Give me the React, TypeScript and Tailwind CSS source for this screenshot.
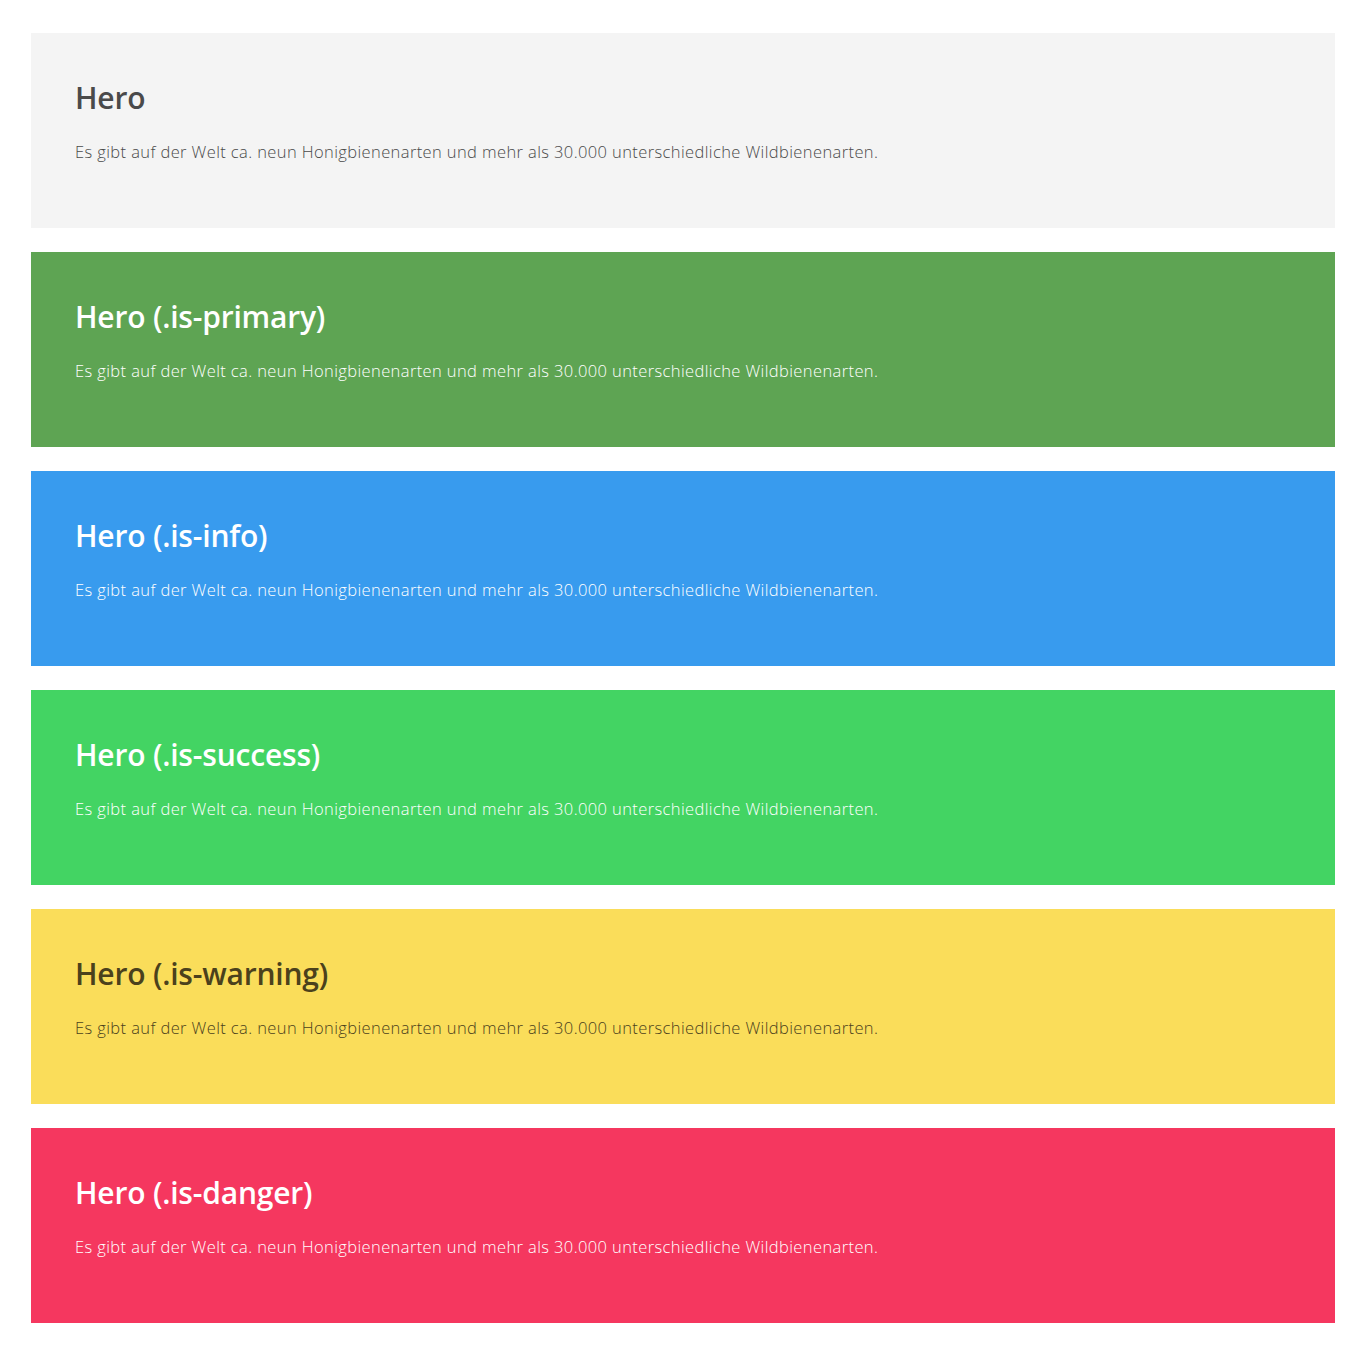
import React from 'react';

type HeroProps = {
  title: string;
  className: string;
};

const text = 'Es gibt auf der Welt ca. neun Honigbienenarten und mehr als 30.000 unterschiedliche Wildbienenarten.';

const Hero: React.FC<HeroProps> = ({ title, className }) => (
  <section className={`h-[195px] w-[1304px] px-[44px] pt-[43px] ${className}`}>
    <h1 className="text-[30px] leading-[44px] font-semibold tracking-[-0.2px]">{title}</h1>
    <p className="mt-[20px] text-[16.5px] leading-[24px] font-light tracking-[0.39px]">{text}</p>
  </section>
);

const App: React.FC = () => {
  return (
    <div className="min-h-[1352px] bg-white pl-[31px] pt-[33px] font-['Open_Sans',sans-serif]">
      <div className="flex flex-col gap-6">
        {/* 기본 */}
        <Hero title="Hero" className="bg-[#f4f4f4] text-[#4a4a4a]" />
        <Hero title="Hero (.is-primary)" className="bg-[#5ea453] text-white" />
        <Hero title="Hero (.is-info)" className="bg-[#389bee] text-white" />
        <Hero title="Hero (.is-success)" className="bg-[#43d463] text-white" />
        <Hero title="Hero (.is-warning)" className="bg-[#fadd5a] text-[#4b411c]" />
        <Hero title="Hero (.is-danger)" className="bg-[#f5375f] text-white" />
      </div>
    </div>
  );
};

export default App;
